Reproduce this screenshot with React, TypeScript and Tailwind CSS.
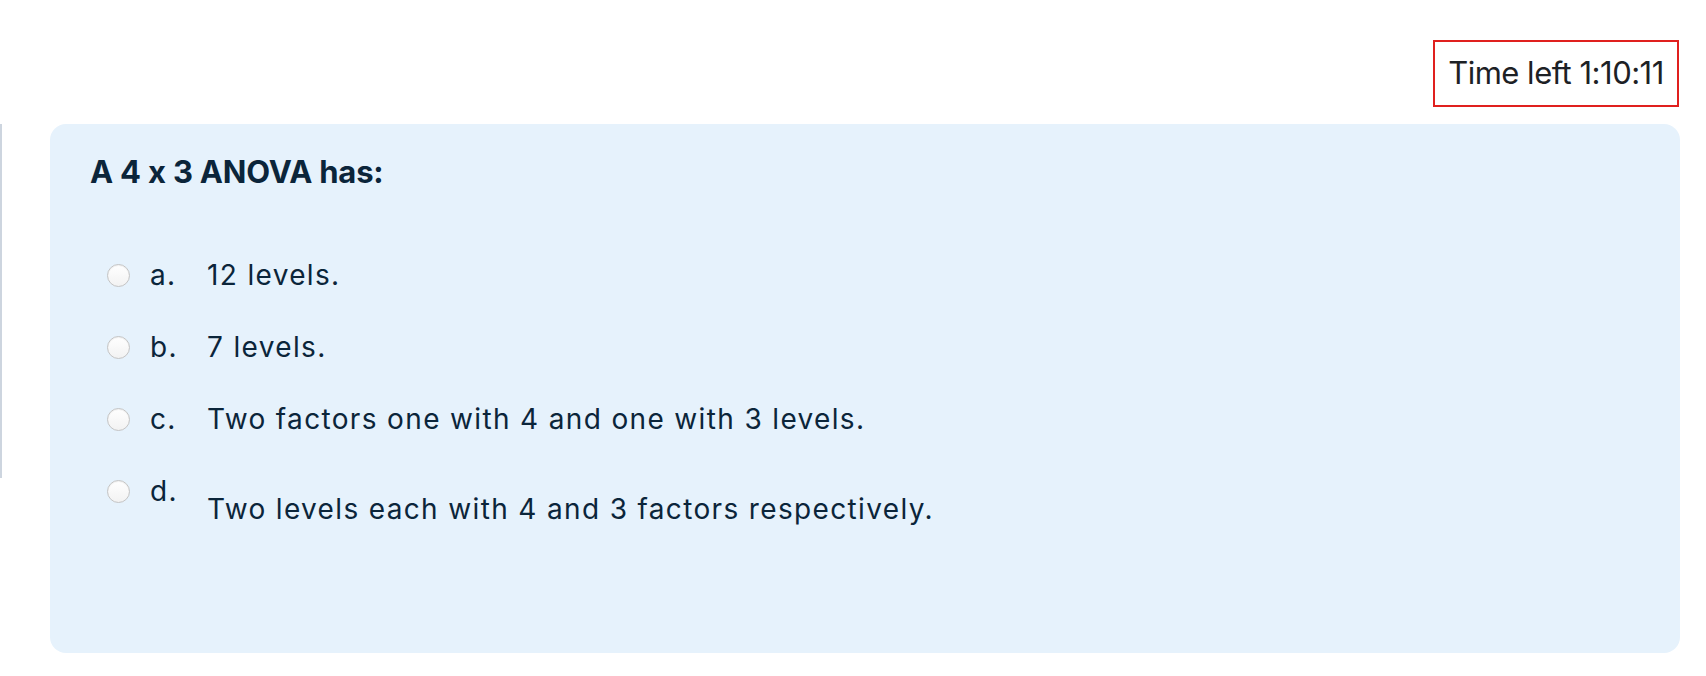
import React from "react";

const options = [
  { letter: "a.", text: "12 levels." },
  { letter: "b.", text: "7 levels." },
  { letter: "c.", text: "Two factors one with 4 and one with 3 levels." },
  { letter: "d.", text: "Two levels each with 4 and 3 factors respectively.", low: true },
];

const Radio = () => (
  <span className="block h-[23px] w-[23px] shrink-0 rounded-full border border-[#c4c4c4] bg-gradient-to-b from-white to-[#f2f2f2] shadow-[inset_0_1px_1px_rgba(0,0,0,0.06)]" />
);

const App = () => {
  return (
    <div className="min-h-[676px] w-full bg-white font-['Inter',sans-serif] text-[#0b253a]">
      <div className="flex justify-end pr-[27px] pt-[40px]">
        <div className="flex h-[67px] w-[246px] items-center justify-center border-2 border-[#e0201e] text-[31px] font-normal text-[#1d2125] tracking-[-0.5px]">
          Time left 1:10:11
        </div>
      </div>

      <div className="mt-[17px] flex items-start pr-[26px]">
        <div className="h-[354px] w-[2px] bg-[#cdd5df]" />
        <div className="ml-[48px] h-[529px] flex-1 rounded-[16px] bg-[#e6f2fc] pl-[40px] pt-[28px]">
          <h2 className="text-[31px] font-bold leading-[40px] tracking-[-0.2px]">A 4 x 3 ANOVA has:</h2>

          <div className="mt-[63px] flex flex-col gap-[32px] pl-[17px]">
            {options.map((opt) => (
              <div key={opt.letter} className="flex items-start text-[28px] leading-[40px] tracking-[1.35px]">
                <div className="flex h-[40px] items-center">
                  <Radio />
                </div>
                <span className="ml-[20px] w-[57px]">{opt.letter}</span>
                <span className={opt.low ? "mt-[18px]" : ""}>{opt.text}</span>
              </div>
            ))}
          </div>
        </div>
      </div>
    </div>
  );
};

export default App;
